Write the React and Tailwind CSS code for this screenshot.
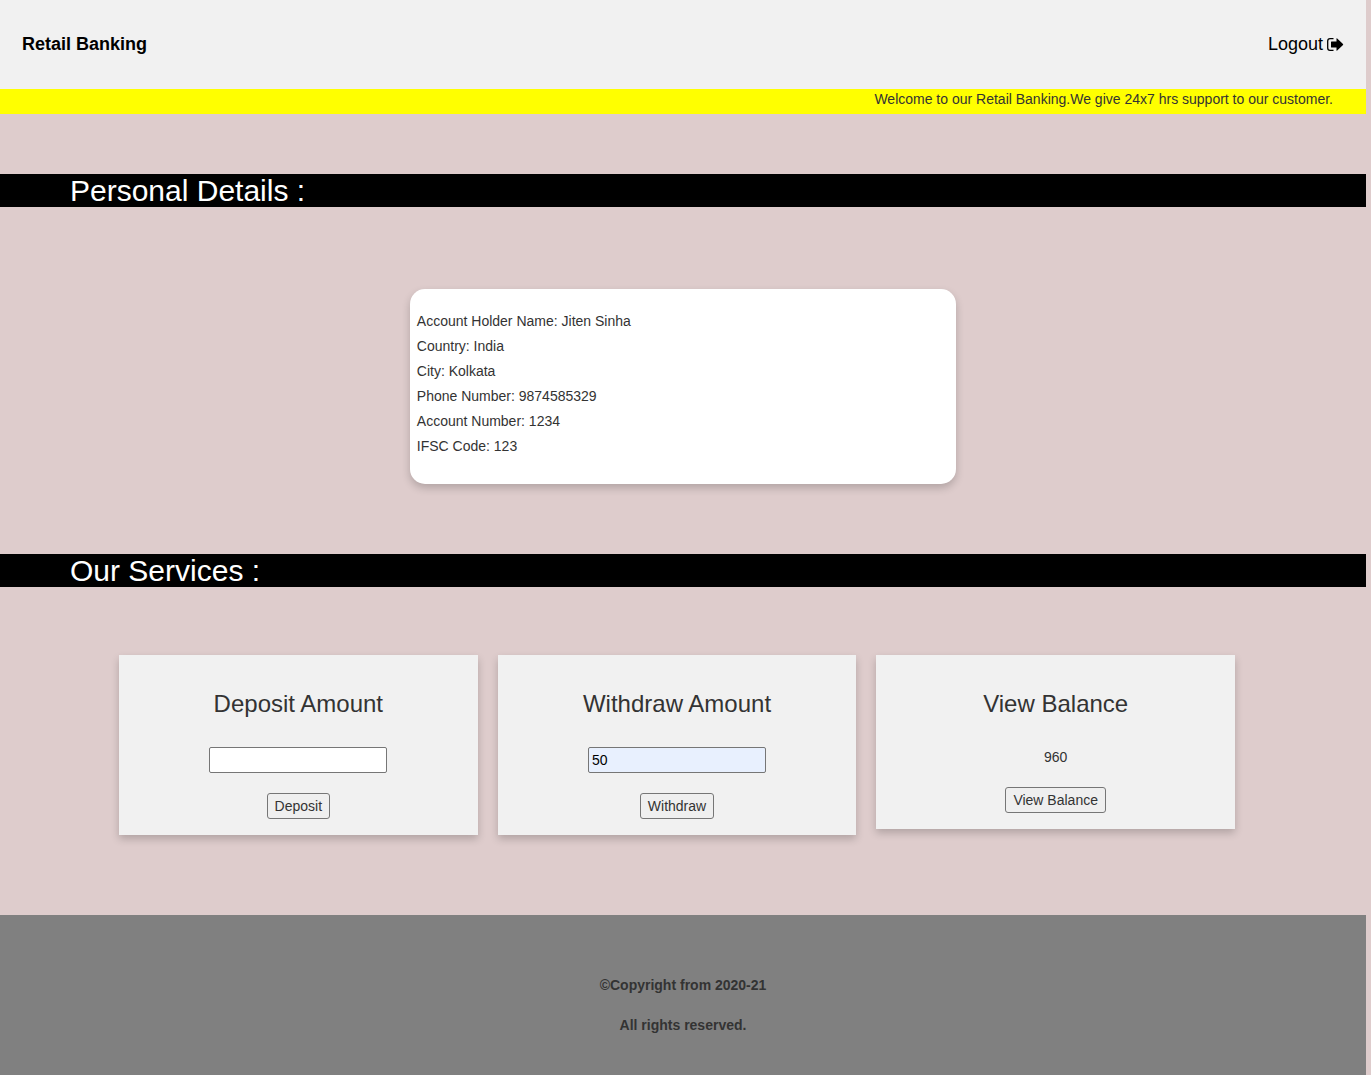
function SectionTitle({ children }) {
  return <h2 className="bg-black pl-[70px] text-[30px] leading-[33px] text-white">{children}</h2>;
}

const details = [
  ['Account Holder Name', 'Jiten Sinha'],
  ['Country', 'India'],
  ['City', 'Kolkata'],
  ['Phone Number', '9874585329'],
  ['Account Number', '1234'],
  ['IFSC Code', '123'],
];

const button =
  'h-[26px] rounded-[3px] border border-[#767676] bg-[#efefef] px-[7px] text-sm leading-5';
const field =
  'block h-[26px] w-[178px] rounded-[2px] border border-[#767676] px-[3px] text-sm text-black';
const card =
  'flex flex-1 flex-col items-center bg-[#f1f1f1] px-4 pt-9 pb-4 shadow-[0_4px_8px_0_rgba(0,0,0,0.2)]';

function AmountCard({ title, id, action, value, fill }) {
  return (
    <section className={card}>
      <h3 className="text-2xl leading-[26px]">
        <label htmlFor={id}>{title}</label>
      </h3>
      <input id={id} type="text" defaultValue={value} className={`${field} ${fill} mt-[30px]`} />
      <button type="button" className={`${button} mt-5`}>{action}</button>
    </section>
  );
}

export default function App() {
  return (
    <div className="min-h-screen bg-[#decccc] pr-[5px] font-['Liberation_Sans',Arial,sans-serif] text-sm text-[#333333]">
      <header className="flex items-center justify-between bg-[#f1f1f1] px-[22px] py-8 text-black">
        <a href="#home" className="text-lg leading-[25px] font-bold">Retail Banking</a>
        <a href="#logout" className="flex items-center gap-1 text-lg leading-[25px]">
          Logout
          <svg viewBox="0 0 17 16" className="h-4 w-[17px]" aria-hidden="true">
            <path d="M6.500 1.700H3Q0.700 1.700 0.700 4V11Q0.700 13.300 3 13.300H6.500" fill="none" stroke="currentColor" strokeWidth="1.300" />
            <path d="M9.500 1.500Q9.800 1.200 10.200 1.600L16 7.100Q16.400 7.500 16 7.900L10.200 13.400Q9.800 13.800 9.500 13.500V10.500H4.500Q4 10.500 4 10V5Q4 4.500 4.500 4.500H9.500Z" fill="currentColor" />
          </svg>
        </a>
      </header>
      <p className="bg-[#ffff00] pr-[33px] pb-[5px] text-right leading-5">
        Welcome to our Retail Banking.We give 24x7 hrs support to our customer.
      </p>
      <main className="pt-[60px] pb-20">
        <SectionTitle>Personal Details :</SectionTitle>
        <div className="mx-auto mt-[82px] mb-[70px] w-2/5 rounded-[15px] bg-white px-[7px] pt-5 pb-[25px] leading-[25px] shadow-[0_4px_8px_0_rgba(0,0,0,0.2)]">
          {details.map(([label, value]) => (
            <p key={label}>{label}: {value}</p>
          ))}
        </div>
        <SectionTitle>Our Services :</SectionTitle>
        <div className="mt-[68px] mr-[131px] ml-[119px] flex items-start gap-5">
          <AmountCard title="Deposit Amount" id="deposit" action="Deposit" value="" fill="bg-white" />
          <AmountCard title="Withdraw Amount" id="withdraw" action="Withdraw" value="50" fill="bg-[#e8f0fe]" />
          <section className={card}>
            <h3 className="text-2xl leading-[26px]">View Balance</h3>
            <p className="mt-[30px] leading-5">960</p>
            <button type="button" className={`${button} mt-5`}>View Balance</button>
          </section>
        </div>
      </main>
      <footer className="flex flex-col items-center gap-5 bg-[#808080] pt-[60px] pb-10 font-bold leading-5">
        <p>©Copyright from 2020-21</p>
        <p>All rights reserved.</p>
      </footer>
    </div>
  );
}
